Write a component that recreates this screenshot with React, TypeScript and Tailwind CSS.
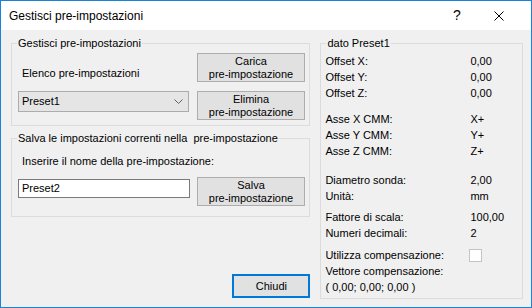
import React from "react";

// =============================================================================
// Gestisci pre-impostazioni — Windows-style preset dialog
// =============================================================================

type Row = { label: string; value?: string; check?: boolean };

// Right panel sections, each separated by a little extra spacing
const SECTIONS: { gap: string; rows: Row[] }[] = [
  {
    gap: "mt-0",
    rows: [
      { label: "Offset X:", value: "0,00" },
      { label: "Offset Y:", value: "0,00" },
      { label: "Offset Z:", value: "0,00" },
    ],
  },
  {
    gap: "mt-[10px]",
    rows: [
      { label: "Asse X CMM:", value: "X+" },
      { label: "Asse Y CMM:", value: "Y+" },
      { label: "Asse Z CMM:", value: "Z+" },
    ],
  },
  {
    gap: "mt-[13px]",
    rows: [
      { label: "Diametro sonda:", value: "2,00" },
      { label: "Unità:", value: "mm" },
    ],
  },
  {
    gap: "mt-[5px]",
    rows: [
      { label: "Fattore di scala:", value: "100,00" },
      { label: "Numeri decimali:", value: "2" },
    ],
  },
  {
    gap: "mt-[6px]",
    rows: [
      { label: "Utilizza compensazione:", check: true },
      { label: "Vettore compensazione:" },
      { label: "( 0,00; 0,00; 0,00 )" },
    ],
  },
];

function Button({ lines }: { lines: string[] }) {
  return (
    <div className="flex h-[29px] w-[108px] flex-col items-center justify-center border border-[#adadad] bg-[#e1e1e1] leading-[13px]">
      {lines.map((l) => (
        <span key={l}>{l}</span>
      ))}
    </div>
  );
}

// Group box with its caption sitting on the top border
function Group({
  title,
  className,
  children,
}: {
  title: string;
  className: string;
  children: React.ReactNode;
}) {
  return (
    <div className={`relative border border-[#dcdcdc] ${className}`}>
      <span className="absolute left-[5px] top-[-8px] whitespace-pre bg-[#f0f0f0] px-[1px] leading-[14px]">
        {title}
      </span>
      {children}
    </div>
  );
}

export default function App() {
  return (
    <div className="flex h-[308px] w-[532px] flex-col border border-[#1883d7] bg-[#f0f0f0] font-['Liberation_Sans',Arial,sans-serif] text-[11px] text-black">
      {/* Title bar */}
      <div className="flex h-[29px] items-center bg-white">
        <span className="pl-[8px] text-[12px]">Gestisci pre-impostazioni</span>
        <div className="ml-auto flex h-full items-center">
          <span className="flex w-[38px] justify-center text-[14px]">?</span>
          <span className="mr-[9px] flex w-[46px] justify-center">
            <svg width="10" height="10" viewBox="0 0 10 10">
              <path d="M0.5 0.5L9.5 9.5M9.5 0.5L0.5 9.5" stroke="#000" strokeWidth="1" />
            </svg>
          </span>
        </div>
      </div>

      {/* Body */}
      <div className="flex flex-1 gap-[10px] pl-[10px] pr-[8px] pt-[13px]">
        {/* Left column */}
        <div className="flex w-[300px] flex-col pb-[9px]">
          <Group title="Gestisci pre-impostazioni" className="h-[83px] w-[299px]">
            <div className="grid grid-cols-[171px_108px] gap-x-[8px] gap-y-[9px] pl-[6px] pt-[9px]">
              <div className="flex items-end pb-[2px] pl-[4px] leading-[14px]">
                Elenco pre-impostazioni
              </div>
              <Button lines={["Carica", "pre-impostazione"]} />
              <div className="flex h-[21px] items-center justify-between border border-[#acacac] bg-[#e5e5e5] pl-[3px] pr-[5px]">
                <span>Preset1</span>
                <svg width="9" height="5" viewBox="0 0 9 5">
                  <path d="M0.5 0.5L4.5 4.5L8.5 0.5" stroke="#606060" fill="none" strokeWidth="1" />
                </svg>
              </div>
              <Button lines={["Elimina", "pre-impostazione"]} />
            </div>
          </Group>

          <Group
            title="Salva le impostazioni correnti nella  pre-impostazione"
            className="mt-[12px] h-[79px] w-[299px]"
          >
            <div className="pl-[10px] pt-[15px] leading-[14px]">
              Inserire il nome della pre-impostazione:
            </div>
            <div className="mt-[9px] grid grid-cols-[172px_108px] gap-x-[7px] pl-[6px]">
              <div className="mt-[2px] flex h-[19px] items-center border border-[#7a7a7a] bg-white pl-[3px]">
                Preset2
              </div>
              <Button lines={["Salva", "pre-impostazione"]} />
            </div>
          </Group>

          <div className="mt-auto flex h-[24px] w-[78px] items-center justify-center self-end border-2 border-[#0078d7] bg-[#e1e1e1]">
            Chiudi
          </div>
        </div>

        {/* Right column — preset details */}
        <Group title="dato Preset1" className="h-[256px] w-[203px]">
          <div className="flex flex-col pl-[4px] pt-[9px] leading-[16px]">
            {SECTIONS.map((s, i) => (
              <div key={i} className={s.gap}>
                {s.rows.map((r) => (
                  <div key={r.label} className="flex h-[16px] items-center">
                    <span className="w-[145px] shrink-0 whitespace-pre">{r.label}</span>
                    {r.value && <span>{r.value}</span>}
                    {r.check && (
                      <span className="ml-[-1px] h-[13px] w-[13px] border border-[#c4c4c4] bg-white" />
                    )}
                  </div>
                ))}
              </div>
            ))}
          </div>
        </Group>
      </div>
    </div>
  );
}
